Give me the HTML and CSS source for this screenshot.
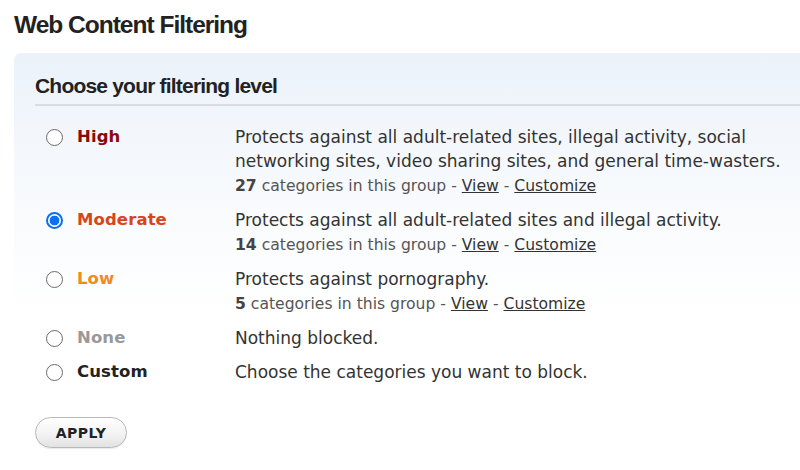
FILE: index.html
```html
<!DOCTYPE html>
<html>
<head>
<meta charset="utf-8">
<link rel="stylesheet" href="styles.css">
</head>
<body>
<h1 class="title">Web Content Filtering</h1>
<div class="panel">
  <h2 class="subtitle">Choose your filtering level</h2>
  <div class="levels">
    <label class="row">
      <span class="pick"><input type="radio" name="lvl" class="radio"><span class="name high">High</span></span>
      <span class="desc">
        <span class="text">Protects against all adult-related sites, illegal activity, social networking sites, video sharing sites, and general time-wasters.</span>
        <span class="meta"><b>27</b> categories in this group - <a href="#">View</a> - <a href="#">Customize</a></span>
      </span>
    </label>
    <label class="row">
      <span class="pick"><input type="radio" name="lvl" class="radio" checked><span class="name moderate">Moderate</span></span>
      <span class="desc">
        <span class="text">Protects against all adult-related sites and illegal activity.</span>
        <span class="meta"><b>14</b> categories in this group - <a href="#">View</a> - <a href="#">Customize</a></span>
      </span>
    </label>
    <label class="row">
      <span class="pick"><input type="radio" name="lvl" class="radio"><span class="name low">Low</span></span>
      <span class="desc">
        <span class="text">Protects against pornography.</span>
        <span class="meta"><b>5</b> categories in this group - <a href="#">View</a> - <a href="#">Customize</a></span>
      </span>
    </label>
    <label class="row">
      <span class="pick"><input type="radio" name="lvl" class="radio"><span class="name none">None</span></span>
      <span class="desc"><span class="text">Nothing blocked.</span></span>
    </label>
    <label class="row">
      <span class="pick"><input type="radio" name="lvl" class="radio"><span class="name custom">Custom</span></span>
      <span class="desc"><span class="text">Choose the categories you want to block.</span></span>
    </label>
  </div>
  <button class="apply" type="button">APPLY</button>
</div>
</body>
</html>
```
FILE: styles.css
```css
html, body {
  margin: 0;
  padding: 0;
  background: #fff;
  overflow: hidden;
}
body {
  width: 800px;
  height: 470px;
  font-family: "DejaVu Sans", Verdana, sans-serif;
  color: #333;
}
.title {
  margin: 0;
  padding: 11px 0 0 14px;
  height: 53px;
  box-sizing: border-box;
  font-family: "Liberation Sans", Arial, sans-serif;
  font-weight: bold;
  font-size: 24.5px;
  line-height: 28px;
  letter-spacing: -1px;
  color: #222;
}
.panel {
  margin-left: 14px;
  width: 820px;
  border-radius: 7px 0 0 0;
  background: linear-gradient(to bottom, #ebf2fa 0px, #f6f9fc 120px, #ffffff 260px);
  padding: 18px 0 0 21px;
  box-sizing: border-box;
  height: 420px;
}
.subtitle {
  margin: 0;
  font-family: "Liberation Sans", Arial, sans-serif;
  font-weight: bold;
  font-size: 21px;
  line-height: 30px;
  letter-spacing: -0.8px;
  color: #222;
  padding-bottom: 3px;
  border-bottom: 2px solid #d9dde2;
}
.levels {
  display: flex;
  flex-direction: column;
  gap: 10px;
  padding-top: 19px;
}
.row {
  display: flex;
  align-items: flex-start;
}
.pick {
  display: flex;
  align-items: center;
  width: 189px;
  height: 24px;
  padding-left: 11px;
  flex: none;
}
.radio {
  appearance: none;
  -webkit-appearance: none;
  margin: 0 14px 0 0;
  width: 17px;
  height: 17px;
  border: 1.5px solid #6b6b6b;
  border-radius: 50%;
  background: #fff;
  box-sizing: border-box;
  flex: none;
}
.radio:checked {
  border: 2px solid #0b6ff0;
  background: radial-gradient(circle, #0b6ff0 0 4.6px, #fff 5.2px);
}
.name {
  font-weight: bold;
  font-size: 16.5px;
  line-height: 24px;
  letter-spacing: 0.1px;
}
.high { color: #8b0a0a; }
.moderate { color: #d8451a; }
.low { color: #f28a1e; }
.none { color: #999; }
.custom { color: #222; }
.desc {
  display: flex;
  flex-direction: column;
  width: 570px;
}
.text {
  font-size: 17px;
  line-height: 24px;
  color: #333;
}
.meta {
  font-size: 15.6px;
  line-height: 24px;
  margin-top: 1px;
  color: #555;
}
.meta b {
  color: #444;
}
.meta a {
  color: #333;
  text-decoration: underline;
}
.apply {
  margin-top: 33px;
  width: 92px;
  height: 31px;
  border: 1.5px solid #b8b8b8;
  border-radius: 16px;
  background: linear-gradient(to bottom, #ffffff 0%, #f3f3f3 55%, #e2e2e2 100%);
  font-family: "DejaVu Sans", Verdana, sans-serif;
  font-weight: bold;
  font-size: 14px;
  letter-spacing: 0.5px;
  color: #222;
  padding: 0;
  box-shadow: 0 1px 1px rgba(0,0,0,0.08);
}
```
